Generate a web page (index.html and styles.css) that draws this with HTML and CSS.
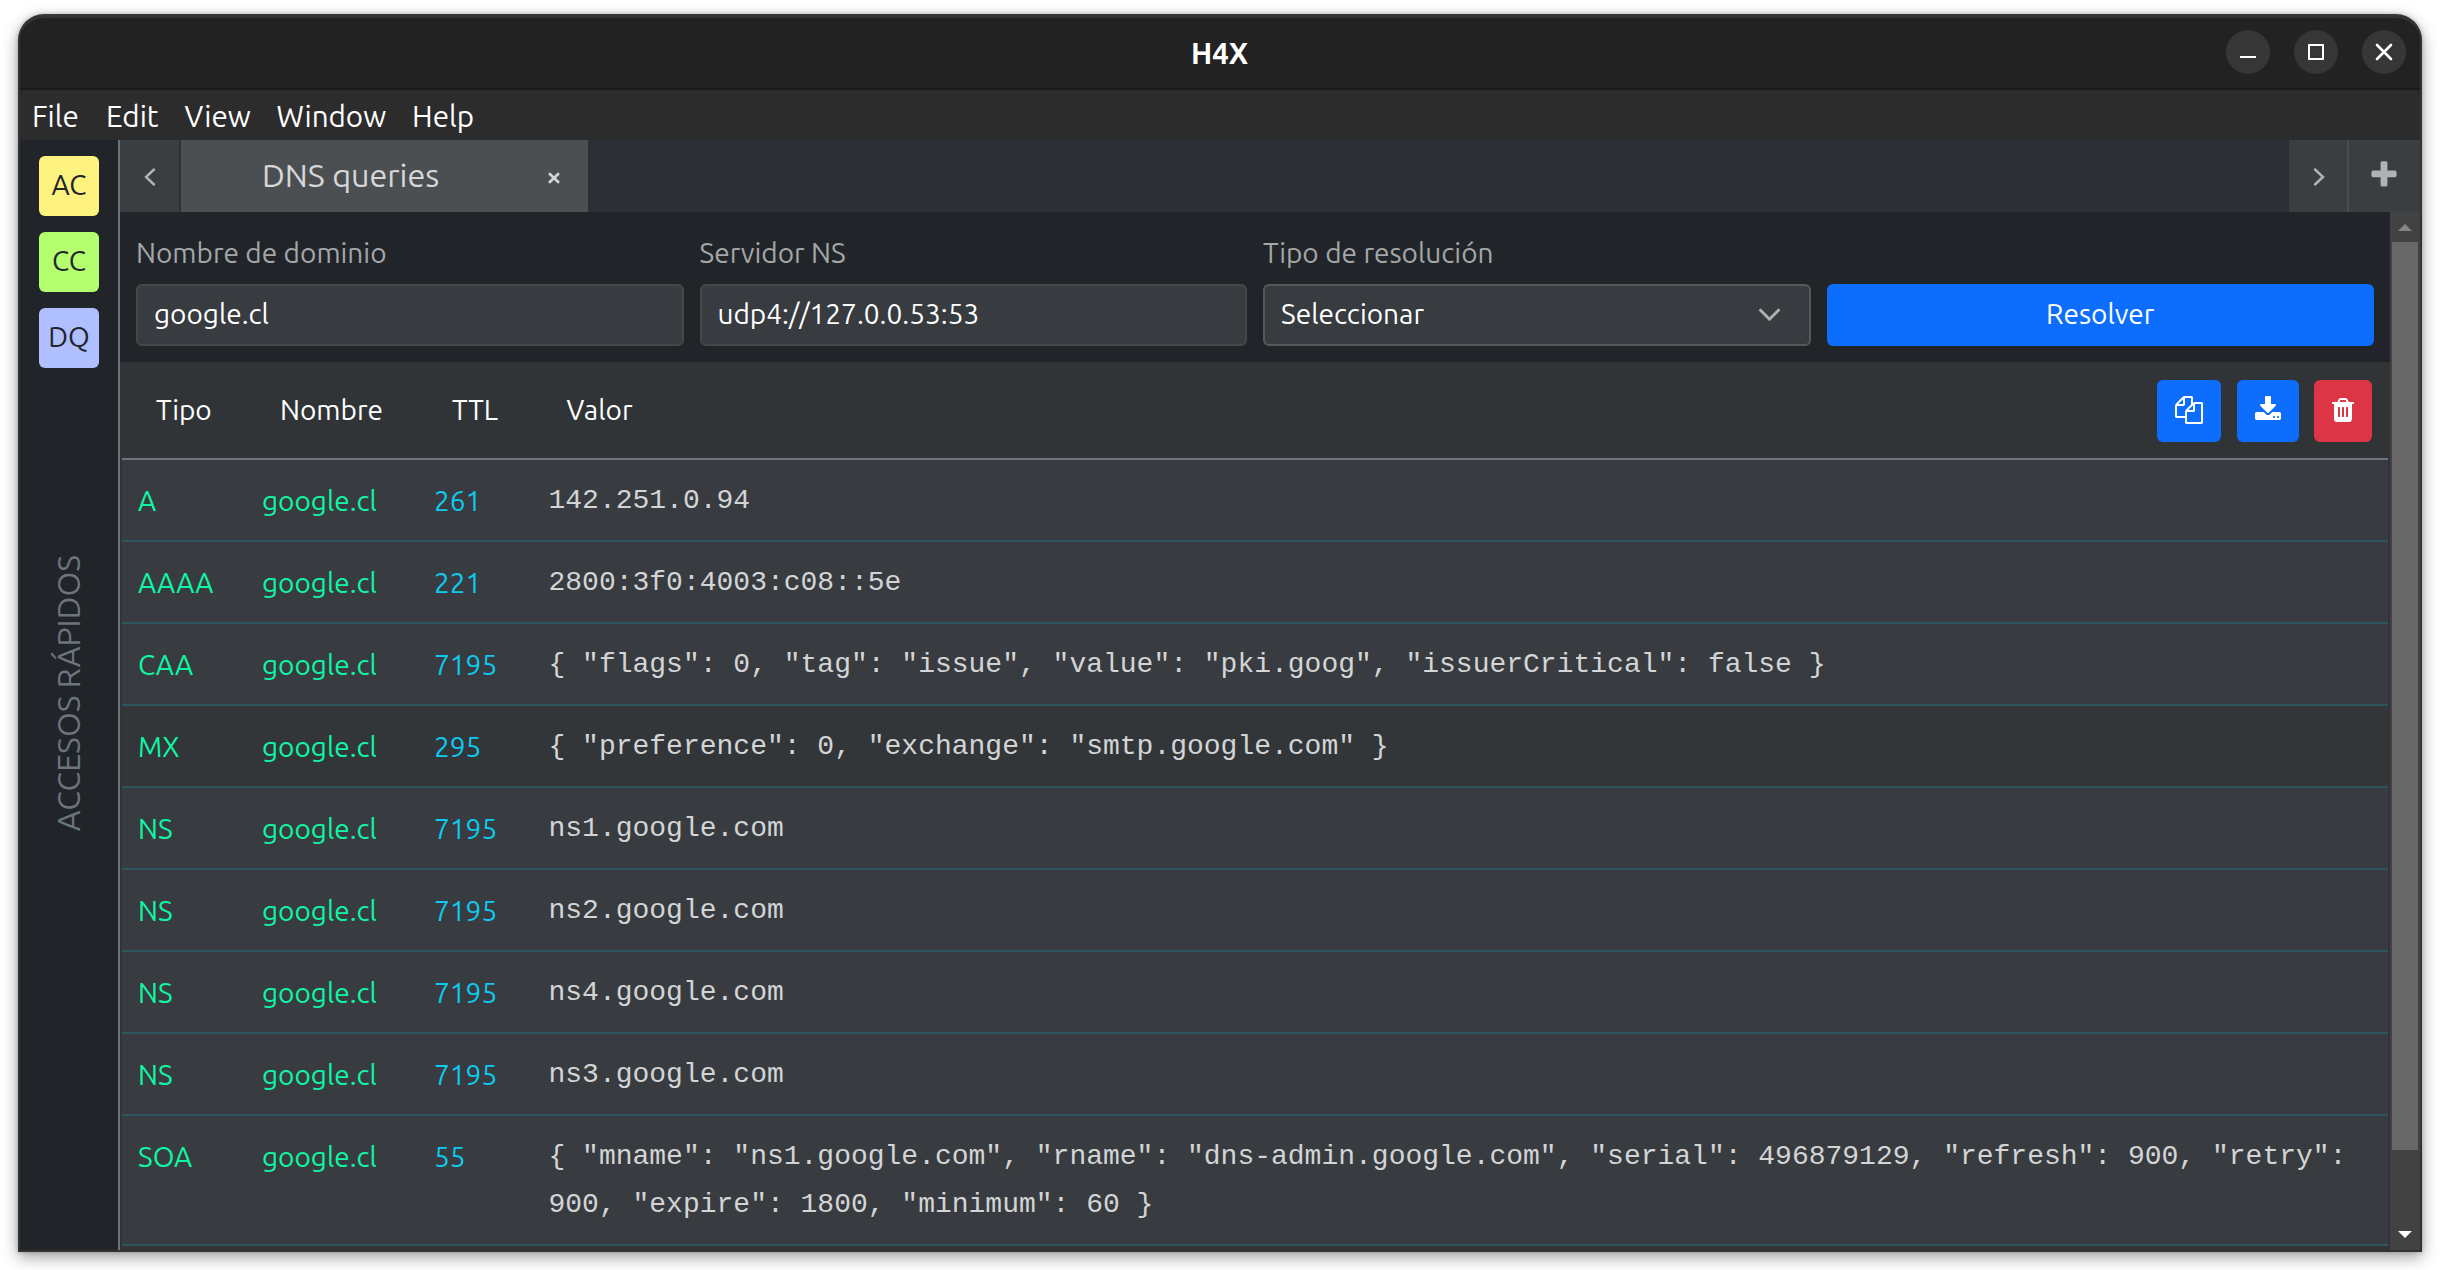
FILE: index.html
```html
<!DOCTYPE html>
<html lang="es">
<head>
<meta charset="utf-8">
<title>H4X</title>
<link rel="stylesheet" href="styles.css">
</head>
<body>
<div class="window">
  <header class="titlebar">
    <span class="title">H4X</span>
    <div class="controls">
      <span class="control"><svg width="44" height="44"><path d="M14 27h16" stroke="#fff" stroke-width="2"/></svg></span>
      <span class="control"><svg width="44" height="44"><path d="M15 15h14v14h-14z" fill="none" stroke="#fff" stroke-width="2"/></svg></span>
      <span class="control"><svg width="44" height="44"><path d="M15 15l14 14M29 15l-14 14" stroke="#fff" stroke-width="2.6" stroke-linecap="round"/></svg></span>
    </div>
  </header>
  <nav class="menu">
    <span>File</span><span>Edit</span><span>View</span><span>Window</span><span>Help</span>
  </nav>
  <div class="body">
    <aside class="sidebar">
      <div class="shortcuts">
        <span class="shortcut yellow">AC</span>
        <span class="shortcut green">CC</span>
        <span class="shortcut blue">DQ</span>
      </div>
      <span class="side-label">ACCESOS RÁPIDOS</span>
    </aside>
    <main class="main">
      <div class="tabs">
        <span class="prev"><svg width="16" height="22"><path d="M13 3.5L5 11l8 7.500" fill="none" stroke="#b0b3b4" stroke-width="2.4" stroke-linecap="round"/></svg></span>
        <div class="tab"><span class="tab-name">DNS queries</span><svg class="tab-close" width="14" height="14"><path d="M2 2.200l10 9.600M12 2.200l-10 9.600" stroke="#d4d5d6" stroke-width="2.600"/></svg></div>
        <span class="next"><svg width="16" height="22"><path d="M4 3.500l8 7.500-8 7.500" fill="none" stroke="#b0b3b4" stroke-width="2.400" stroke-linecap="round"/></svg></span>
        <span class="add"><svg width="32" height="32" viewBox="0 0 1792 1792"><path fill="#b0b2b3" d="M1600 736v192q0 40-28 68t-68 28h-416v416q0 40-28 68t-68 28h-192q-40 0-68-28t-28-68v-416h-416q-40 0-68-28t-28-68v-192q0-40 28-68t68-28h416v-416q0-40 28-68t68-28h192q40 0 68 28t28 68v416h416q40 0 68 28t28 68z"/></svg></span>
      </div>
      <div class="view">
        <div class="content">
          <form class="form">
            <div class="field"><span class="label">Nombre de dominio</span><div class="input">google.cl</div></div>
            <div class="field"><span class="label">Servidor NS</span><div class="input">udp4://127.0.0.53:53</div></div>
            <div class="field"><span class="label">Tipo de resolución</span><div class="input select"><span>Seleccionar</span><svg width="26" height="16"><path d="M3.500 3.200l9 9 9-9" fill="none" stroke="#adb0b2" stroke-width="3" stroke-linecap="round" stroke-linejoin="round"/></svg></div></div>
            <div class="field"><div class="submit">Resolver</div></div>
          </form>
          <div class="results">
            <table>
              <colgroup><col class="c-type"><col class="c-name"><col class="c-ttl"><col></colgroup>
              <thead>
                <tr>
                  <th>Tipo</th><th>Nombre</th><th>TTL</th>
                  <th><div class="head-row"><span class="value-head">Valor</span>
                    <div class="actions">
                      <span class="btn copy"><svg width="28" height="28" viewBox="0 0 1792 1792"><path fill="#fff" d="M1696 384q40 0 68 28t28 68v1216q0 40-28 68t-68 28h-960q-40 0-68-28t-28-68v-288h-544q-40 0-68-28t-28-68v-672q0-40 20-88t48-76l408-408q28-28 76-48t88-20h416q40 0 68 28t28 68v328q68-40 128-40h416zm-544 213l-299 299h299v-299zm-640-384l-299 299h299v-299zm196 647l316-316v-416h-384v416q0 40-28 68t-68 28h-416v640h512v-256q0-40 20-88t48-76zm956 804v-1152h-384v416q0 40-28 68t-68 28h-416v640h896z"/></svg></span>
                      <span class="btn download"><svg width="28" height="28" viewBox="0 0 1792 1792"><path fill="#fff" fill-rule="evenodd" d="M1344 1344q0-26-19-45t-45-19-45 19-19 45 19 45 45 19 45-19 19-45zm256 0q0-26-19-45t-45-19-45 19-19 45 19 45 45 19 45-19 19-45zm128-224v320q0 40-28 68t-68 28h-1472q-40 0-68-28t-28-68v-320q0-40 28-68t68-28h465l135 136q58 56 136 56t136-56l136-136h464q40 0 68 28t28 68zm-325-569q17 41-14 70l-448 448q-18 19-45 19t-45-19l-448-448q-31-29-14-70 17-39 59-39h256v-448q0-26 19-45t45-19h256q26 0 45 19t19 45v448h256q42 0 59 39z"/></svg></span>
                      <span class="btn trash"><svg width="28" height="28" viewBox="0 0 1792 1792"><path fill="#fff" fill-rule="evenodd" d="M704 736v576q0 14-9 23t-23 9h-64q-14 0-23-9t-9-23v-576q0-14 9-23t23-9h64q14 0 23 9t9 23zm256 0v576q0 14-9 23t-23 9h-64q-14 0-23-9t-9-23v-576q0-14 9-23t23-9h64q14 0 23 9t9 23zm256 0v576q0 14-9 23t-23 9h-64q-14 0-23-9t-9-23v-576q0-14 9-23t23-9h64q14 0 23 9t9 23zm-544-352h448l-48-117q-7-9-17-11h-317q-10 2-17 11zm928 32v64q0 14-9 23t-23 9h-96v948q0 83-47 143.500t-113 60.500h-832q-66 0-113-58.500t-47-141.500v-952h-96q-14 0-23-9t-9-23v-64q0-14 9-23t23-9h309l70-167q15-37 54-63t79-26h320q40 0 79 26t54 63l70 167h309q14 0 23 9t9 23z"/></svg></span>
                    </div></div></th>
                </tr>
              </thead>
              <tbody>
                <tr><td class="type">A</td><td class="name">google.cl</td><td class="ttl">261</td><td class="value">142.251.0.94</td></tr>
                <tr><td class="type">AAAA</td><td class="name">google.cl</td><td class="ttl">221</td><td class="value">2800:3f0:4003:c08::5e</td></tr>
                <tr><td class="type">CAA</td><td class="name">google.cl</td><td class="ttl">7195</td><td class="value">{ "flags": 0, "tag": "issue", "value": "pki.goog", "issuerCritical": false }</td></tr>
                <tr class="hover"><td class="type">MX</td><td class="name">google.cl</td><td class="ttl">295</td><td class="value">{ "preference": 0, "exchange": "smtp.google.com" }</td></tr>
                <tr><td class="type">NS</td><td class="name">google.cl</td><td class="ttl">7195</td><td class="value">ns1.google.com</td></tr>
                <tr><td class="type">NS</td><td class="name">google.cl</td><td class="ttl">7195</td><td class="value">ns2.google.com</td></tr>
                <tr><td class="type">NS</td><td class="name">google.cl</td><td class="ttl">7195</td><td class="value">ns4.google.com</td></tr>
                <tr><td class="type">NS</td><td class="name">google.cl</td><td class="ttl">7195</td><td class="value">ns3.google.com</td></tr>
                <tr><td class="type">SOA</td><td class="name">google.cl</td><td class="ttl">55</td><td class="value">{ "mname": "ns1.google.com", "rname": "dns-admin.google.com", "serial": 496879129, "refresh": 900, "retry": 900, "expire": 1800, "minimum": 60 }</td></tr>
              </tbody>
            </table>
          </div>
        </div>
        <div class="scrollbar">
          <svg width="30" height="30"><path d="M8 19h14l-7-7z" fill="#858585"/></svg>
          <div class="track"><div class="thumb"></div></div>
          <svg width="30" height="30"><path d="M8 11h14l-7 7z" fill="#fff"/></svg>
        </div>
      </div>
    </main>
  </div>
</div>
</body>
</html>
```
FILE: styles.css
```css
* { box-sizing: border-box; }
body {
  margin: 0;
  height: 1270px;
  padding: 14px 18px 18px;
  overflow: hidden;
  background: #fff;
  font-family: Ubuntu, "Noto Sans", sans-serif;
  font-size: 28px;
  font-weight: 440;
  line-height: 48px;
  color: #fff;
}
svg { display: block; flex: none; }
.window {
  display: flex;
  flex-direction: column;
  width: 2404px;
  height: 1238px;
  border: 2px solid #333;
  border-top-color: #373737;
  border-radius: 26px 26px 0 0;
  background: #212529;
  overflow: hidden;
  box-shadow: 0 5px 16px rgba(0, 0, 0, .38), 0 0 4px rgba(0, 0, 0, .2);
}
.titlebar {
  display: grid;
  grid-template-columns: 1fr auto 1fr;
  align-items: center;
  flex: none;
  height: 74px;
  border-top: 2px solid #343434;
  border-bottom: 2px solid #1a1a1a;
  border-radius: 24px 24px 0 0;
  background: #222;
}
.title { grid-column: 2; padding: 2px 1px 0 0; font-size: 29.33px; font-weight: 700; }
.controls { display: flex; gap: 24px; justify-content: flex-end; padding-right: 14px; margin-bottom: 2px; }
.control { width: 44px; height: 44px; border-radius: 50%; background: #363636; }
.menu {
  display: grid;
  grid-template-columns: 74px 78.5px 92px 135.5px auto;
  flex: none;
  height: 50px;
  padding: 2px 0 0 12px;
  background: #2c2c2c;
  font-size: 29.6px;
}
.body { display: flex; flex: 1; min-height: 0; }
.sidebar {
  display: flex;
  flex-direction: column;
  align-items: center;
  flex: none;
  width: 100px;
  padding-top: 16px;
  border-right: 2px solid #6c757d;
}
.shortcuts { display: flex; flex-direction: column; gap: 16px; }
.shortcut {
  width: 60px;
  height: 60px;
  border-radius: 6px;
  text-align: center;
  line-height: 58px;
  color: #212529;
}
.yellow { background: #fff37f; }
.green { background: #b4ff70; }
.blue { background: #b0bfff; }
.side-label {
  margin: 187px 2px 0 0;
  writing-mode: vertical-rl;
  transform: rotate(180deg);
  font-size: 32px;
  color: #6c757d;
}
.main { display: flex; flex-direction: column; flex: 1; min-width: 0; }
.tabs { display: flex; flex: none; height: 72px; background: #2c3035; }
.prev, .next, .add { display: flex; align-items: center; justify-content: center; background: #3b3e41; }
.prev { width: 61px; border-right: 2px solid #2e3235; padding: 2px 2px 0 0; }
.next { width: 60px; margin-left: auto; border-right: 2px solid #4a4e52; padding: 2px 0 0 2px; }
.add { width: 71px; padding: 0 2px 2px 0; }
.tab { display: flex; align-items: center; justify-content: space-between; width: 407px; padding: 0 27px 0 81px; background: #4b4f51; color: #d6d7d8; font-size: 32.3px; }
.tab-name { padding-bottom: 2px; }
.tab-close { margin-top: 3px; }
.view { display: flex; flex: 1; min-height: 0; }
.content { flex: 1; min-width: 0; overflow: hidden; }
.form { display: grid; grid-template-columns: repeat(4, 1fr); gap: 16px; height: 150px; margin: 0; padding: 16px; }
.field { display: flex; flex-direction: column; justify-content: flex-end; }
.label { color: #a4a6a8; line-height: 48px; margin-bottom: 7px; }
.input, .submit { height: 62px; border-radius: 6px; line-height: 56px; }
.input { border: 2px solid #44484b; background: #383b3f; padding: 0 16px; }
.select { display: flex; align-items: center; justify-content: space-between; border-color: #55595b; padding-right: 26px; }
.select span { margin-bottom: 2px; }
.submit { background: #0d6efd; text-align: center; line-height: 60px; }
.results { padding: 0 2px; height: 888px; background: #303437; overflow: hidden; }
table { width: 100%; table-layout: fixed; border-spacing: 0; }
.c-type { width: 124px; }
.c-name { width: 172px; }
.c-ttl { width: 114.5px; }
th { height: 98px; padding: 0 0 0 34px; border-bottom: 2px solid #6c757d; font-weight: 440; text-align: left; vertical-align: middle; }
.head-row { display: flex; justify-content: space-between; align-items: center; padding: 2px 16px 0 0; }
.value-head { padding-bottom: 2px; }
.actions { display: flex; align-items: center; }
.btn { display: flex; align-items: center; justify-content: center; height: 62px; border-radius: 6px; padding-bottom: 2px; background: #0d6efd; }
.copy { width: 64px; margin-right: 16px; }
.download { width: 62px; margin-right: 15px; }
.trash { width: 58px; background: #dc3545; }
td { padding: 17px 0 15px 16px; border-bottom: 2px solid #2c555e; background: #383b40; vertical-align: top; }
.hover td { background: #323639; }
.type, .name { color: #0ff5a3; }
.ttl { color: #0dcaf0; }
.value { padding: 17px 16px 15px; color: #d3d4d5; font: 28px/48px "Liberation Mono", monospace; }
.scrollbar { display: flex; flex-direction: column; flex: none; width: 30px; background: #424242; }
.track { flex: 1; padding: 0 2px; }
.thumb { height: 908px; background: #686868; }
```
